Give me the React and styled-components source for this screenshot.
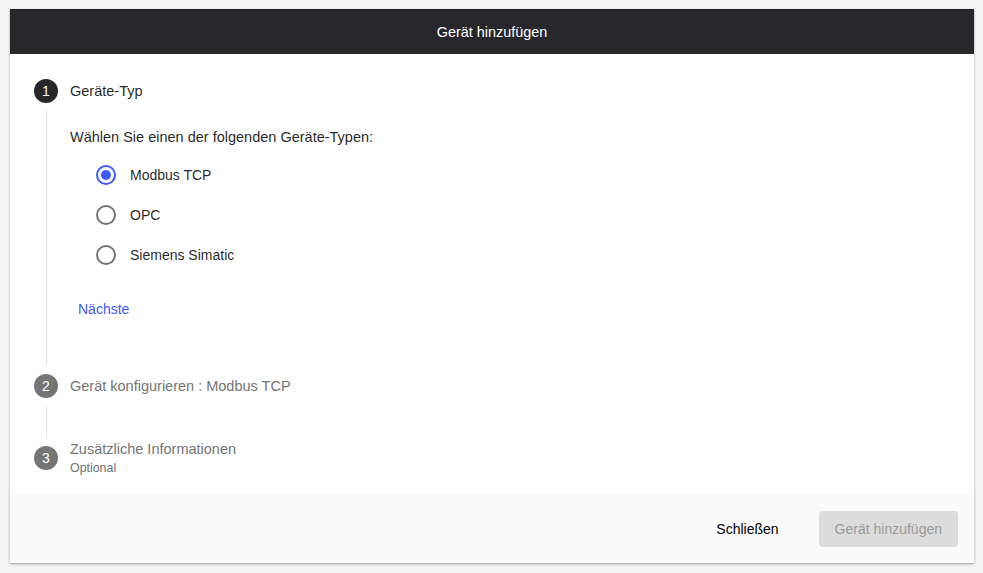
import React, { useState } from "react";
import styled, { createGlobalStyle } from "styled-components";

const Global = createGlobalStyle`
  html, body { margin: 0; padding: 0; background: #f5f5f5; }
  body { font-family: "Liberation Sans", Arial, sans-serif; color: rgba(0,0,0,0.87); }
  * { box-sizing: border-box; }
`;

const Page = styled.div`
  padding: 9px 9px 10px 10px;
  height: 573px;
`;

const Dialog = styled.div`
  width: 964px;
  height: 554px;
  background: #fff;
  display: flex;
  flex-direction: column;
  box-shadow: 0 1px 3px rgba(0,0,0,0.25), 0 1px 1px rgba(0,0,0,0.12);
`;

const Header = styled.div`
  height: 45px;
  flex: none;
  background: #27262b;
  color: #fff;
  display: flex;
  align-items: center;
  justify-content: center;
  font-size: 14.4px;
`;

const Body = styled.div`
  flex: 1;
  padding: 25px 24px 0 24px;
`;

const StepHeader = styled.div`
  display: flex;
  align-items: center;
  gap: 12px;
  min-height: 24px;
`;

const Circle = styled.div`
  width: 24px;
  height: 24px;
  flex: none;
  border-radius: 50%;
  background: ${p => (p.$active ? "#27262b" : "#757575")};
  color: #fff;
  font-size: 14px;
  display: flex;
  align-items: center;
  justify-content: center;
`;

const LabelBox = styled.div`
  display: flex;
  flex-direction: column;
`;

const Label = styled.div`
  font-size: 14.5px;
  line-height: 20px;
  color: ${p => (p.$active ? "rgba(0,0,0,0.87)" : "#757575")};
`;

const SubLabel = styled.div`
  font-size: 12.4px;
  line-height: 18px;
  color: #757575;
`;

const Connector = styled.div`
  margin: ${p => p.$mt}px 0 ${p => p.$mb}px 12px;
  border-left: 1px solid #e0e0e0;
  height: ${p => p.$h}px;
  padding-left: 23px;
`;

const Intro = styled.div`
  padding-top: 16px;
  font-size: 14.5px;
  line-height: 20px;
`;

const RadioGroup = styled.div`
  margin: 8px 0 0 26px;
  display: flex;
  flex-direction: column;
`;

const RadioRow = styled.label`
  height: 40px;
  display: flex;
  align-items: center;
  gap: 14px;
  font-size: 14px;
  cursor: pointer;
`;

const RadioOuter = styled.span`
  width: 20px;
  height: 20px;
  border-radius: 50%;
  border: 2px solid ${p => (p.$checked ? "#3d5afe" : "#757575")};
  display: flex;
  align-items: center;
  justify-content: center;
`;

const RadioDot = styled.span`
  width: 10px;
  height: 10px;
  border-radius: 50%;
  background: #3d5afe;
`;

const TextButton = styled.button`
  margin-top: 16px;
  height: 36px;
  padding: 0 8px;
  border: none;
  background: transparent;
  color: #3d5afe;
  font-family: inherit;
  font-size: 14px;
  cursor: pointer;
`;

const Footer = styled.div`
  height: 68px;
  flex: none;
  background: #fafafa;
  display: flex;
  align-items: center;
  justify-content: flex-end;
  padding: 0 16px 0 0;
  gap: 24px;
`;

const FooterButton = styled.button`
  height: 36px;
  padding: 0 16px;
  border: none;
  border-radius: 4px;
  font-family: inherit;
  font-size: 14px;
  background: ${p => (p.$disabled ? "#dcdcdc" : "transparent")};
  color: ${p => (p.$disabled ? "#9a9a9a" : "#000")};
  cursor: ${p => (p.$disabled ? "default" : "pointer")};
`;

const types = ["Modbus TCP", "OPC", "Siemens Simatic"];

export default function App() {
  const [sel, setSel] = useState("Modbus TCP");
  return (
    <>
      <Global />
      <Page>
        <Dialog>
          <Header>Gerät hinzufügen</Header>
          <Body>
            <StepHeader>
              <Circle $active>1</Circle>
              <Label $active>Geräte-Typ</Label>
            </StepHeader>
            <Connector $h={254} $mt={8} $mb={9}>
              <Intro>Wählen Sie einen der folgenden Geräte-Typen:</Intro>
              <RadioGroup>
                {types.map(t => (
                  <RadioRow key={t} onClick={() => setSel(t)}>
                    <RadioOuter $checked={sel === t}>{sel === t && <RadioDot />}</RadioOuter>
                    {t}
                  </RadioRow>
                ))}
              </RadioGroup>
              <TextButton>Nächste</TextButton>
            </Connector>
            <StepHeader>
              <Circle>2</Circle>
              <Label>Gerät konfigurieren : Modbus TCP</Label>
            </StepHeader>
            <Connector $h={31} $mt={9} $mb={1} />
            <StepHeader>
              <Circle>3</Circle>
              <LabelBox>
                <Label>Zusätzliche Informationen</Label>
                <SubLabel>Optional</SubLabel>
              </LabelBox>
            </StepHeader>
          </Body>
          <Footer>
            <FooterButton>Schließen</FooterButton>
            <FooterButton $disabled disabled>Gerät hinzufügen</FooterButton>
          </Footer>
        </Dialog>
      </Page>
    </>
  );
}
